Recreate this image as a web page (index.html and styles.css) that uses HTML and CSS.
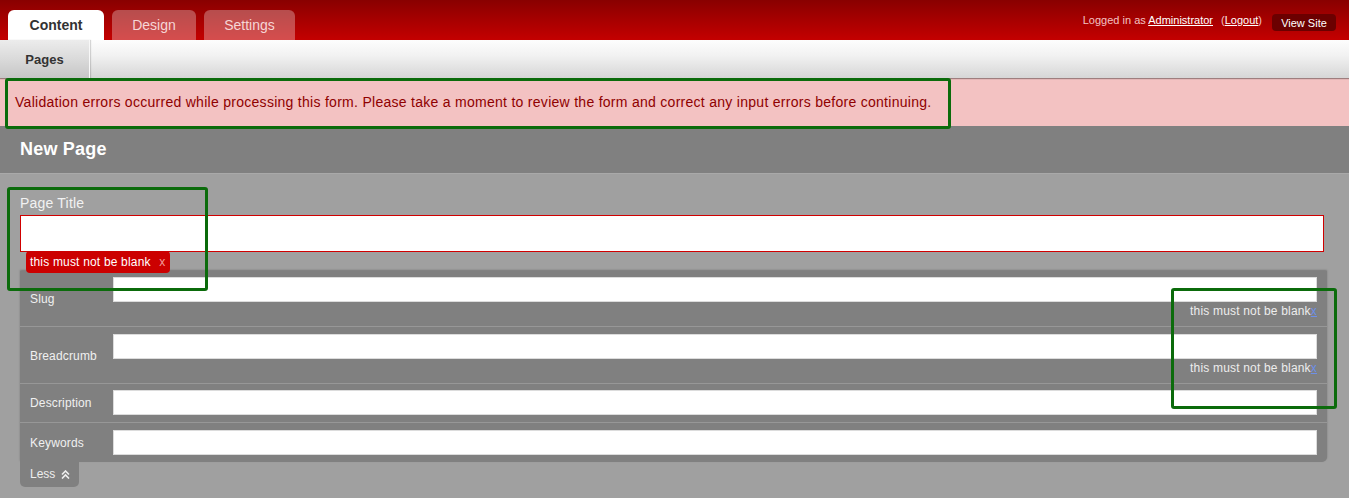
FILE: index.html
```html
<!DOCTYPE html>
<html>
<head>
<meta charset="utf-8">
<link rel="stylesheet" href="styles.css">
</head>
<body>
<div class="page">
  <header class="topbar">
    <nav class="tabs">
      <a class="tab active">Content</a>
      <a class="tab tab-design">Design</a>
      <a class="tab tab-settings">Settings</a>
    </nav>
    <div class="user">
      <span>Logged in as <a class="ulink">Administrator</a></span>
      <span class="logout">(<a class="ulink">Logout</a>)</span>
      <a class="viewsite">View Site</a>
    </div>
  </header>
  <div class="subnav">
    <a class="subtab">Pages</a>
  </div>
  <div class="errorbar">Validation errors occurred while processing this form. Please take a moment to review the form and correct any input errors before continuing.</div>
  <h1 class="title">New Page</h1>
  <main class="content">
    <div class="titlefield">
      <label class="biglabel">Page Title</label>
      <div class="bigwrap">
        <input class="biginput" type="text">
        <div class="tooltip">this must not be blank <span class="tx">x</span></div>
      </div>
    </div>
    <div class="fieldset">
      <div class="row r1">
        <label class="rlabel">Slug</label>
        <div class="rfield">
          <input class="rinput" type="text">
          <div class="err">this must not be blank<a class="errx">x</a></div>
        </div>
      </div>
      <div class="row r2">
        <label class="rlabel">Breadcrumb</label>
        <div class="rfield">
          <input class="rinput" type="text">
          <div class="err">this must not be blank<a class="errx">x</a></div>
        </div>
      </div>
      <div class="row r3">
        <label class="rlabel">Description</label>
        <div class="rfield"><input class="rinput" type="text"></div>
      </div>
      <div class="row r4">
        <label class="rlabel">Keywords</label>
        <div class="rfield"><input class="rinput" type="text"></div>
      </div>
    </div>
    <div class="less">Less <svg class="chev" width="9" height="9" viewBox="0 0 9 9"><polyline points="1,4.5 4.5,1 8,4.5" fill="none" stroke="#eee" stroke-width="1.6"/><polyline points="1,8.5 4.5,5 8,8.5" fill="none" stroke="#eee" stroke-width="1.6"/></svg></div>
  </main>
  <div class="mark mark1"></div>
  <div class="mark mark2"></div>
  <div class="mark mark3"></div>
</div>
</body>
</html>
```
FILE: styles.css
```css
html, body { margin: 0; padding: 0; }
body {
  font-family: "Liberation Sans", Arial, sans-serif;
  background: #a0a0a0;
  width: 1349px;
  height: 498px;
  overflow: hidden;
}
.page { position: relative; }

.topbar {
  height: 40px;
  background: linear-gradient(#890000, #c40000);
  display: flex;
  justify-content: space-between;
  padding-left: 8px;
  box-sizing: border-box;
}
.tabs { display: flex; gap: 8px; align-items: flex-end; }
.tab {
  height: 30px;
  line-height: 30px;
  text-align: center;
  font-size: 14px;
  border-radius: 6px 6px 0 0;
  background: rgba(255,255,255,0.3);
  color: #f6d6d6;
}
.tab.active { width: 96px; background: #fff; color: #333; font-weight: bold; }
.tab-design { width: 84px; }
.tab-settings { width: 91px; }

.user {
  display: flex;
  align-items: flex-start;
  font-size: 11px;
  color: #f3c3c3;
  padding-top: 14px;
  padding-right: 13px;
}
.user > span { line-height: 13px; }
.ulink { color: #fff; text-decoration: underline; }
.logout { margin-left: 8px; }
.viewsite {
  margin-left: 10px;
  background: #6b0000;
  color: #fff;
  border-radius: 4px;
  width: 64px;
  height: 17px;
  line-height: 18px;
  text-align: center;
  font-size: 11px;
}

.subnav {
  height: 38px;
  background: linear-gradient(#fdfdfd, #f2f2f2 40%, #d6d6d6);
  box-shadow: 0 1px 1px rgba(0,0,0,0.35);
  display: flex;
  position: relative;
}
.subtab {
  width: 89px;
  height: 38px;
  line-height: 39px;
  text-align: center;
  font-size: 13px;
  font-weight: bold;
  color: #333;
  background: linear-gradient(#ececec, #dadada 50%, #c6c6c6);
  border-right: 1px solid #f8f8f8;
  box-shadow: 1px 0 1px rgba(0,0,0,0.15);
}

.errorbar {
  height: 48px;
  background: #f3c2c2;
  color: #8f0000;
  font-size: 14px;
  letter-spacing: 0.28px;
  line-height: 48px;
  padding-left: 15px;
}

.title {
  margin: 0;
  height: 47px;
  line-height: 47px;
  background: #808080;
  color: #fff;
  font-size: 18px;
  font-weight: bold;
  letter-spacing: 0.2px;
  padding-left: 20px;
  border-bottom: 1px solid #a9a9a9;
}

.content { padding: 20px 22px 0 20px; }
.titlefield { display: flex; flex-direction: column; }
.biglabel { font-size: 14px; line-height: 18px; color: #f2f2f2; margin-bottom: 3px; letter-spacing: 0.2px; }
.bigwrap { position: relative; }
.biginput {
  display: block;
  box-sizing: border-box;
  width: 1304px;
  height: 37px;
  border: 1px solid #d00000;
  background: #fff;
  margin: 0;
  padding: 0;
  outline: none;
}
.tooltip {
  position: absolute;
  left: 6px;
  top: 36px;
  width: 144px;
  height: 22px;
  box-sizing: border-box;
  padding-left: 4px;
  background: #cc0000;
  border-radius: 4px;
  color: #fff;
  font-size: 12px;
  letter-spacing: 0.18px;
  line-height: 22px;
  z-index: 2;
}
.tx { color: #f39a9a; margin-left: 5px; }

.fieldset {
  margin-top: 19px;
  width: 1307px;
  background: #808080;
  border-radius: 0 0 5px 0;
  box-shadow: 0 -1px 2px rgba(0,0,0,0.25);
}
.row {
  display: flex;
  align-items: center;
  padding: 6px 10px 6px 10px;
  border-top: 1px solid #979797;
}
.row.r1 { border-top: none; padding-top: 6px; }
.row.r2 { padding-top: 7px; }
.row.r3 { padding-bottom: 7px; }
.row.r4 { padding-top: 7px; padding-bottom: 7px; }
.rlabel { width: 83px; font-size: 12px; color: #f0f0f0; letter-spacing: 0.15px; }
.rfield { width: 1204px; }
.rinput {
  display: block;
  box-sizing: border-box;
  width: 1204px;
  height: 25px;
  border: 1px solid #dcdcdc;
  background: #fff;
  margin: 0;
  padding: 0;
}
.err {
  text-align: right;
  font-size: 12px;
  letter-spacing: 0.18px;
  line-height: 18px;
  color: #ededed;
}
.errx { color: #6d8fe8; text-decoration: underline; }

.less {
  width: 59px;
  height: 25px;
  box-sizing: border-box;
  padding-left: 10px;
  background: #808080;
  border-radius: 0 0 5px 5px;
  color: #eee;
  font-size: 12px;
  line-height: 25px;
  display: flex;
  align-items: center;
  gap: 6px;
}

.mark {
  position: absolute;
  border: 3px solid #0b6b0b;
  border-radius: 3px;
  box-sizing: border-box;
  z-index: 5;
}
.mark1 { left: 5px; top: 78px; width: 946px; height: 51px; }
.mark2 { left: 7px; top: 187px; width: 201px; height: 104px; }
.mark3 { left: 1171px; top: 288px; width: 166px; height: 121px; }
```
